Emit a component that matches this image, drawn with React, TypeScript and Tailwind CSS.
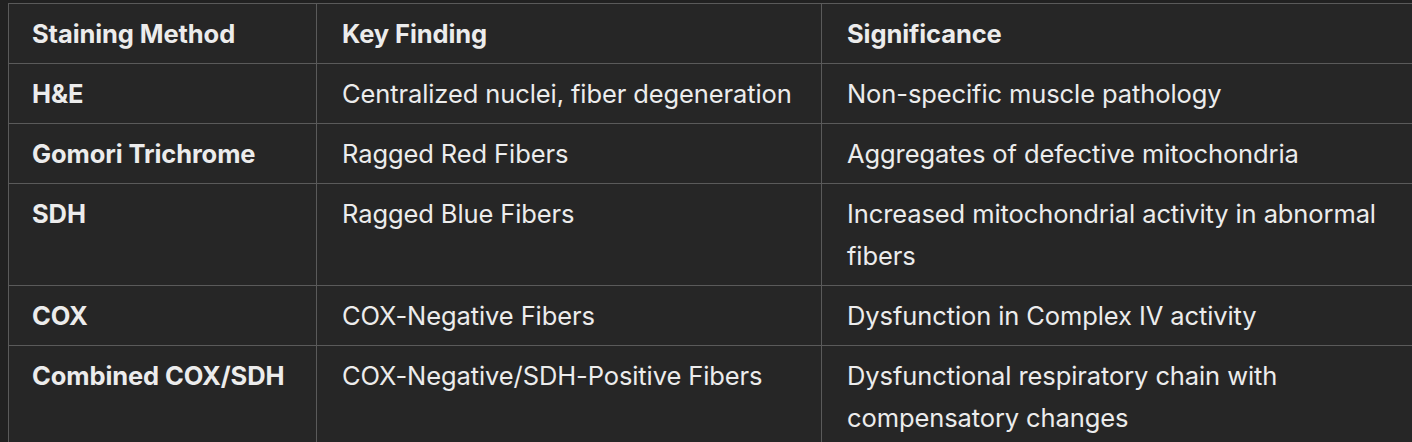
import React from "react";

const rows: [string, string, string][] = [
  ["H&E", "Centralized nuclei, fiber degeneration", "Non-specific muscle pathology"],
  ["Gomori Trichrome", "Ragged Red Fibers", "Aggregates of defective mitochondria"],
  ["SDH", "Ragged Blue Fibers", "Increased mitochondrial activity in abnormal fibers"],
  ["COX", "COX-Negative Fibers", "Dysfunction in Complex IV activity"],
  ["Combined COX/SDH", "COX-Negative/SDH-Positive Fibers", "Dysfunctional respiratory chain with compensatory changes"],
];

const cell = "border border-[#5a5a5a] pr-[16px] pt-[9px] pb-[8px] text-left align-top";
const first = `${cell} pl-[23px] font-bold`;
const rest = `${cell} pl-[25px]`;

export default function App() {
  return (
    <div
      className="h-[442px] w-[1412px] overflow-hidden bg-[#212121] pl-[8px] pt-[3px] text-[#ececec]"
      style={{ fontFamily: "Inter, 'Noto Sans', sans-serif" }}
    >
      <table className="w-[1404px] table-fixed border-collapse bg-[#262626] text-[25.5px] leading-[42px] tracking-[-0.1px]">
        <colgroup>
          <col className="w-[308px]" />
          <col className="w-[505px]" />
          <col className="w-[591px]" />
        </colgroup>
        <thead>
          <tr>
            <th className={first}>Staining Method</th>
            <th className={`${rest} font-bold`}>Key Finding</th>
            <th className={`${rest} font-bold`}>Significance</th>
          </tr>
        </thead>
        <tbody>
          {rows.map(([method, finding, sig]) => (
            <tr key={method}>
              <td className={first}>{method}</td>
              <td className={rest}>{finding}</td>
              <td className={rest}>{sig}</td>
            </tr>
          ))}
        </tbody>
      </table>
    </div>
  );
}
